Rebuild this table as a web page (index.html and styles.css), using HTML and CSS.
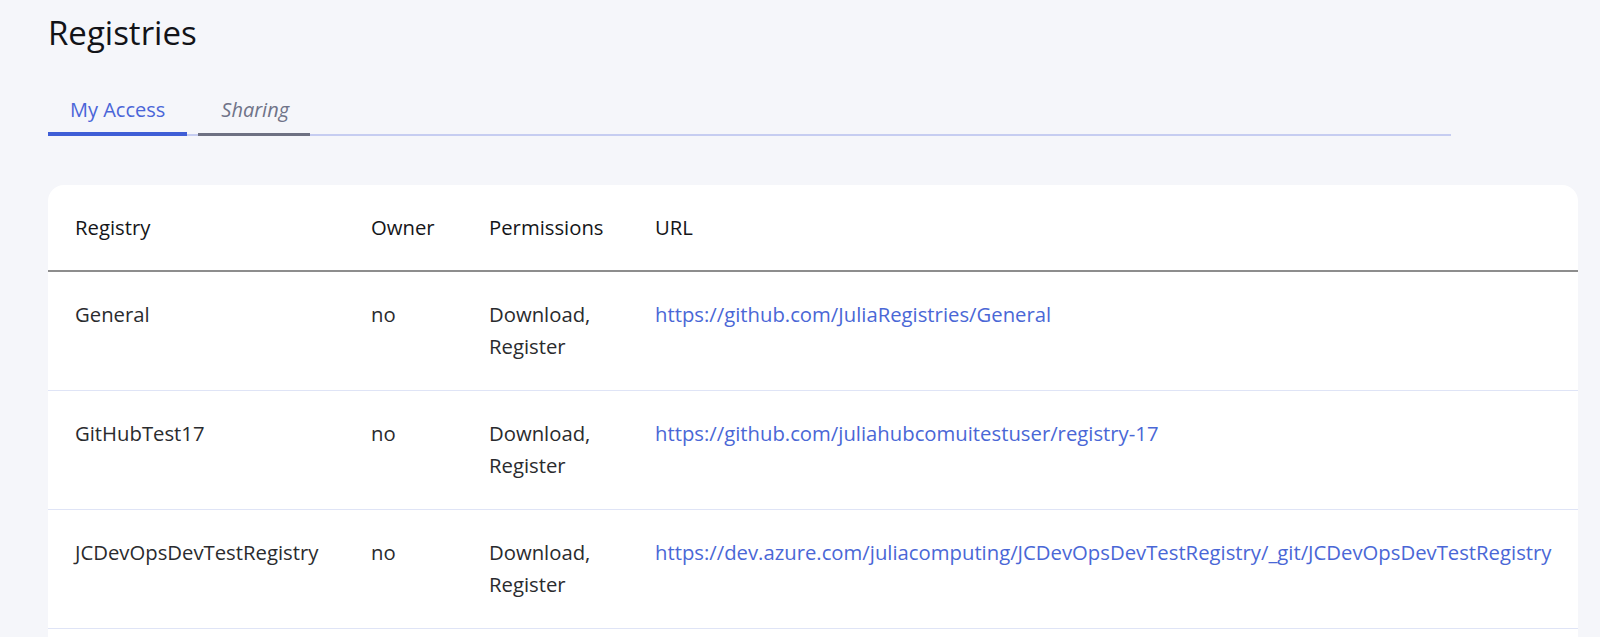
FILE: index.html
```html
<!DOCTYPE html>
<html lang="en">
<head>
<meta charset="utf-8">
<title>Registries</title>
<link rel="stylesheet" href="styles.css">
</head>
<body>
<main class="page">
  <h1 class="title">Registries</h1>
  <nav class="tabs">
    <a class="tab tab-active">My Access</a>
    <a class="tab tab-other">Sharing</a>
  </nav>
  <section class="card">
    <div class="row row-head">
      <div class="cell">Registry</div>
      <div class="cell">Owner</div>
      <div class="cell">Permissions</div>
      <div class="cell">URL</div>
    </div>
    <div class="row">
      <div class="cell">General</div>
      <div class="cell">no</div>
      <div class="cell">Download,<br>Register</div>
      <div class="cell"><a class="link">https://github.com/JuliaRegistries/General</a></div>
    </div>
    <div class="row">
      <div class="cell">GitHubTest17</div>
      <div class="cell">no</div>
      <div class="cell">Download,<br>Register</div>
      <div class="cell"><a class="link">https://github.com/juliahubcomuitestuser/registry-17</a></div>
    </div>
    <div class="row">
      <div class="cell">JCDevOpsDevTestRegistry</div>
      <div class="cell">no</div>
      <div class="cell">Download,<br>Register</div>
      <div class="cell"><a class="link">https://dev.azure.com/juliacomputing/JCDevOpsDevTestRegistry/_git/JCDevOpsDevTestRegistry</a></div>
    </div>
    <div class="row">
      <div class="cell">&nbsp;</div>
      <div class="cell"></div>
      <div class="cell"></div>
      <div class="cell"></div>
    </div>
  </section>
</main>
</body>
</html>
```

FILE: styles.css
```css
html, body {
  margin: 0;
  padding: 0;
  background: #f5f6fa;
  font-family: "Open Sans", "Noto Sans", sans-serif;
  overflow: hidden;
}

.page {
  padding: 0 22px 0 48px;
}

.title {
  margin: 0;
  padding-top: 13px;
  font-size: 33px;
  line-height: 40px;
  font-weight: 400;
  color: #121318;
}

.tabs {
  display: flex;
  align-items: flex-end;
  width: 1403px;
  margin-top: 43px;
  border-bottom: 2px solid #c6cdf1;
}

.tab {
  font-size: 20px;
  line-height: 28px;
  padding: 0 22px 8px;
  margin-bottom: -2px;
  cursor: pointer;
}

.tab-active {
  color: #4a65d8;
  border-bottom: 4px solid #3f5ed6;
}

.tab-other {
  margin-left: 11px;
  padding: 0 21px 9px 23px;
  color: #6f7388;
  font-style: italic;
  border-bottom: 3px solid #6e7182;
}

.card {
  margin-top: 49px;
  background: #ffffff;
  border-radius: 16px;
  padding: 0;
}

.row {
  display: grid;
  grid-template-columns: 296px 118px 166px 1fr;
  padding: 26px 0 28px 27px;
  border-bottom: 1px solid #dfe4f6;
  font-size: 20.3px;
  line-height: 32px;
  color: #2a2b2e;
}

.row-head {
  padding: 26px 0 27px 27px;
  border-bottom: 2px solid #8d8d8d;
  color: #151619;
}

.cell {
  white-space: nowrap;
}

.link {
  color: #4a67d6;
  text-decoration: none;
}
```
